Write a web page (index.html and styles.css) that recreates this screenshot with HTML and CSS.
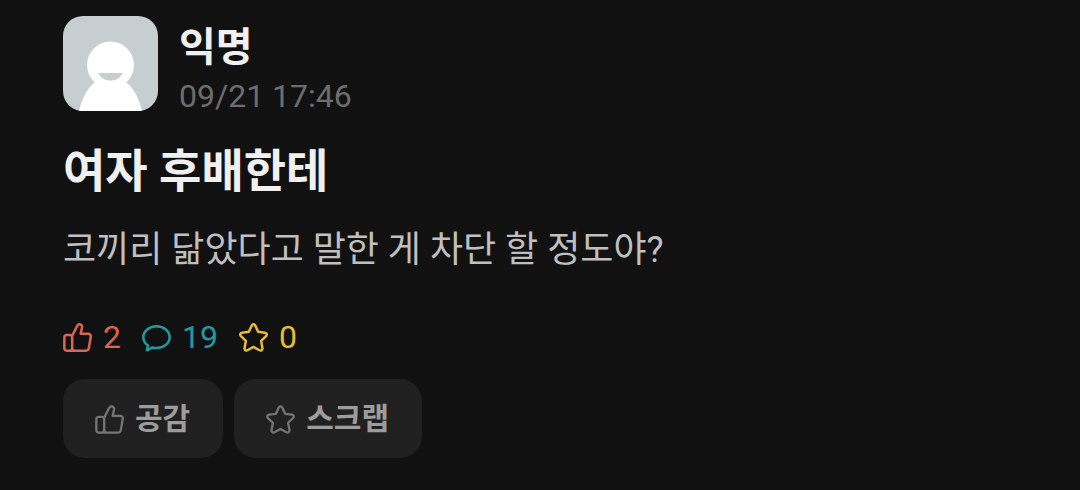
FILE: index.html
```html
<!DOCTYPE html>
<html lang="ko">
<head>
<meta charset="utf-8">
<meta name="viewport" content="width=device-width, initial-scale=1">
<title>여자 후배한테</title>
<link rel="stylesheet" href="styles.css">
</head>
<body>
<svg class="symbols" aria-hidden="true">
  <symbol id="like" viewBox="0 0 30 30">
    <path d="M9.5 13.2 14.6 3.2C15.2 2 16 1.4 17 1.4C18.8 1.4 20 2.8 19.7 4.6L18.3 11.2H26C27.9 11.2 29 12.6 28.7 14.4L26.7 26C26.4 27.7 25.3 28.6 23.8 28.6H4C2.4 28.6 1.4 27.6 1.4 26V14.8C1.4 13.3 2.4 12.3 4 12.3H7C8.6 12.3 9.5 13.2 9.5 14.8V26.2C9.5 27.6 8.6 28.6 7.4 28.6M9.5 26.2C9.5 27.8 10.4 28.6 12 28.6"/>
  </symbol>
  <symbol id="comment" viewBox="0 0 30 30">
    <path d="M15 3.4C7.4 3.4 1.4 8.5 1.4 14.7C1.4 18.2 3.2 21.2 6.2 23.2L5.1 28.2L10.8 25.3C12.1 25.7 13.6 25.9 15 25.9C22.6 25.9 28.6 20.9 28.6 14.7C28.6 8.5 22.6 3.4 15 3.4Z"/>
  </symbol>
  <symbol id="star" viewBox="0 0 30 30">
    <path d="M13.2 2.6C14 1 16 1 16.8 2.6L19.8 9.1L26.9 10C28.7 10.3 29.3 12.2 28 13.5L22.9 18.4L24.2 25.9C24.5 27.8 22.9 29.1 21.2 28.2L15 24.8L8.8 28.2C7.1 29.1 5.5 27.8 5.8 25.9L7.1 18.4L2 13.5C.7 12.2 1.3 10.3 3.1 10L10.2 9.1Z"/>
  </symbol>
</svg>
<article class="post">
  <header class="author">
    <svg class="avatar" viewBox="0 0 95 95" role="img" aria-label="프로필 사진">
      <rect class="avatar-bg" width="95" height="95"/>
      <circle class="avatar-body" cx="47.500" cy="49" r="23.500"/>
      <path class="avatar-body" d="M16 95C19 82 24 73 31.500 66.500H63.500C71 73 76 82 79 95Z"/>
      <path class="avatar-bg" d="M35 57H60C57 62 53 64.500 47.500 64.500S38 62 35 57Z"/>
    </svg>
    <div class="byline">
      <span class="name">익명</span>
      <time class="date">09/21 17:46</time>
    </div>
  </header>
  <h1 class="title">여자 후배한테</h1>
  <p class="body">코끼리 닮았다고 말한 게 차단 할 정도야?</p>
  <ul class="stats">
    <li class="stat stat-like"><svg class="icon" aria-label="공감"><use href="#like"/></svg>2</li>
    <li class="stat stat-comment"><svg class="icon" aria-label="댓글"><use href="#comment"/></svg>19</li>
    <li class="stat stat-scrap"><svg class="icon" aria-label="스크랩"><use href="#star"/></svg>0</li>
  </ul>
  <div class="actions">
    <button class="action" type="button"><svg class="icon" aria-hidden="true"><use href="#like"/></svg>공감</button>
    <button class="action" type="button"><svg class="icon" aria-hidden="true"><use href="#star"/></svg>스크랩</button>
  </div>
</article>
</body>
</html>
```
FILE: styles.css
```css
* {
  box-sizing: border-box;
}

body {
  margin: 0;
  background: #111;
  color: #f0f0f0;
  font-family: Roboto, "Noto Sans CJK KR", sans-serif;
}

.symbols {
  display: none;
}

.post {
  padding: 16px 63px 32px;
}

.author {
  display: flex;
  align-items: flex-start;
  gap: 21px;
}

.avatar {
  flex: none;
  width: 95px;
  height: 95px;
  border-radius: 20px;
}

.avatar-bg {
  fill: #c6ced1;
}

.avatar-body {
  fill: #fff;
}

.byline {
  display: flex;
  flex-direction: column;
  padding-top: 4px;
}

.name {
  font-size: 40px;
  font-weight: 700;
  line-height: 56px;
}

.date {
  color: #6d6d6d;
  font-size: 32px;
  line-height: 40px;
}

.title {
  margin: 23px 0 0;
  font-size: 46px;
  font-weight: 700;
  line-height: 64px;
}

.body {
  margin: 23px 0 0;
  color: #bfbfbf;
  font-size: 36px;
  line-height: 48px;
}

.stats {
  display: flex;
  gap: 21px;
  margin: 46px 0 0;
  padding: 0;
  list-style: none;
  font-size: 32px;
  line-height: 34px;
}

.stat {
  display: flex;
  align-items: center;
  gap: 11px;
}

.stat-like {
  color: #dc6552;
}

.stat-comment {
  color: #219ba1;
}

.stat-scrap {
  color: #e6bb36;
}

.icon {
  flex: none;
  width: 29px;
  height: 29px;
  fill: none;
  stroke: currentColor;
  stroke-width: 2.6;
  stroke-linejoin: round;
  stroke-linecap: round;
}

.actions {
  display: flex;
  flex-wrap: wrap;
  gap: 11px;
  margin-top: 25px;
}

.action {
  display: flex;
  align-items: center;
  gap: 11px;
  padding: 20px 33px 19px 32px;
  border: 0;
  border-radius: 22px;
  background: #202020;
  color: #9c9c9c;
  font: inherit;
  font-size: 30px;
  font-weight: 700;
  line-height: 40px;
}

.action .icon {
  color: #747474;
  stroke-width: 2.4;
}
```
